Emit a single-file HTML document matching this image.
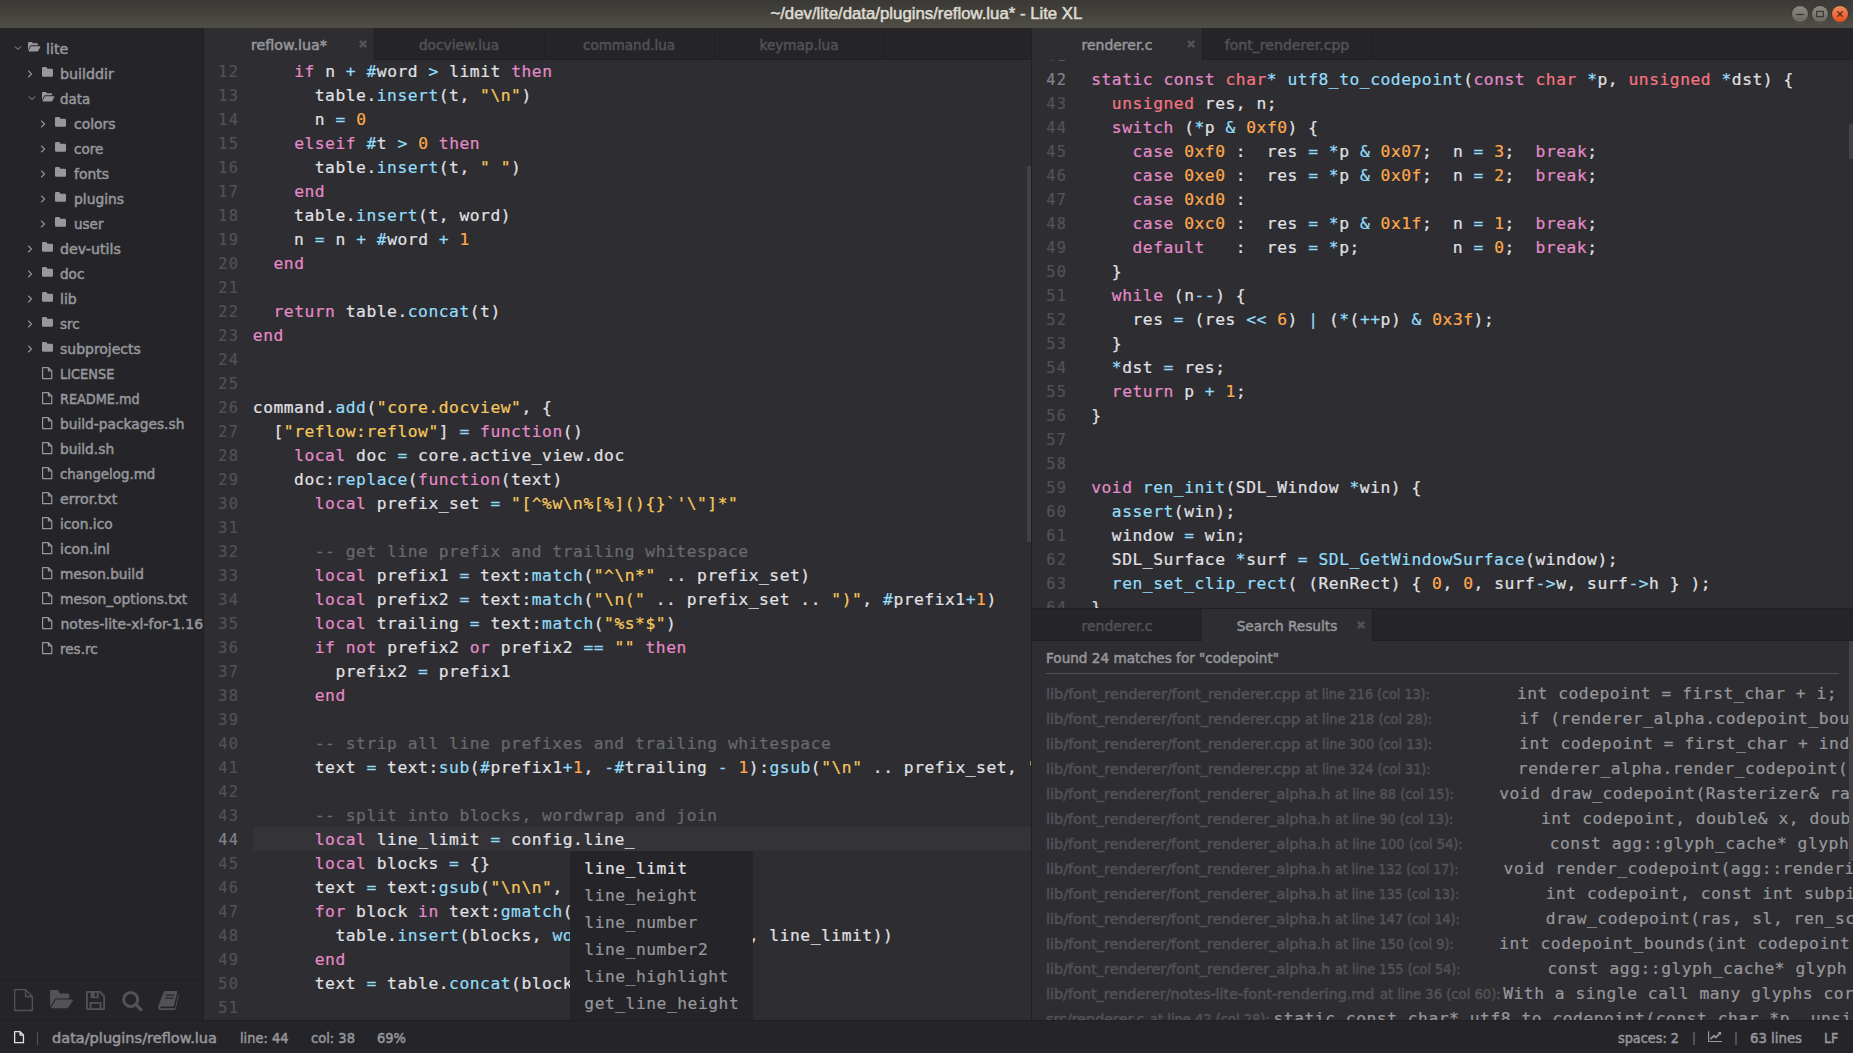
<!DOCTYPE html><html><head><meta charset="utf-8"><title>~/dev/lite/data/plugins/reflow.lua* - Lite XL</title><style>

html,body{margin:0;padding:0;}
body{width:1853px;height:1053px;overflow:hidden;background:#2e2e32;position:relative;font-family:"DejaVu Sans", "Liberation Sans", sans-serif;font-size:14px;color:#97979c;}
div,span,svg{box-sizing:border-box;}
.abs{position:absolute;}
.pane{position:absolute;overflow:hidden;}
.ui{position:absolute;white-space:pre;line-height:24px;height:24px;-webkit-text-stroke:0.5px currentColor;}
.ctr{display:inline-block;white-space:pre;transform:translateX(-50%);}
.ic{position:absolute;display:block;overflow:visible;}
.code{position:absolute;white-space:pre;-webkit-text-stroke:0.2px currentColor;font-family:"DejaVu Sans Mono", "Liberation Mono", monospace;font-size:16.3px;line-height:24px;height:24px;color:#e1e1e6;letter-spacing:0.528px;}
.ln{color:#525259;font-size:15.3px;letter-spacing:1.13px;}
.ln.cur{color:#83838f;}
.cm{color:#676b6f;}.kw{color:#E58AC9;}.k2{color:#F77483;}.nu{color:#FFA94D;}.st{color:#f7c95c;}.op{color:#93DDFA;}.fn{color:#93DDFA;}
.tab{position:absolute;height:32px;}
.tab.act{background:#2e2e32;}
.tabbar{position:absolute;height:32px;background:#252529;border-bottom:1px solid #202024;}
.tsep{position:absolute;width:1px;top:0;height:31px;background:#202024;}
#title{position:absolute;left:0;top:0;width:1853px;height:28px;background:linear-gradient(#3a3935,#403f3a 35%,#504e46);}
#title .t{position:absolute;left:0;width:1853px;top:0;height:28px;line-height:27px;text-align:center;color:#dfdbd2;font-family:"Liberation Sans","DejaVu Sans",sans-serif;font-weight:normal;font-size:16.4px;-webkit-text-stroke:0.55px #dfdbd2;text-shadow:0 -1px 0 rgba(0,0,0,.4);}
.wb{position:absolute;top:6px;width:16px;height:16px;border-radius:50%;box-shadow:0 0 0 1px rgba(40,38,34,.55), 0 1px 0 1px rgba(255,255,255,.08);}

</style></head><body>
<div id="title"><div class="t"><span style="display:inline-block;transform:scaleX(1.0237);">~/dev/lite/data/plugins/reflow.lua* - Lite XL</span></div>
<div class="wb" style="left:1792px;background:linear-gradient(#8c8a80,#6b6962);"></div>
<div class="wb" style="left:1812px;background:linear-gradient(#8c8a80,#6b6962);"></div>
<div class="wb" style="left:1832px;background:linear-gradient(#f58a5f,#e3501d);"></div>
<svg class="ic" style="left:1792.00px;top:6.00px;" width="16.00" height="16.00" viewBox="0 0 16 16" ><path d="M4 8.5 H12" stroke="#3a3934" stroke-width="1.2"/></svg>
<svg class="ic" style="left:1812.00px;top:6.00px;" width="16.00" height="16.00" viewBox="0 0 16 16" ><rect x="4.6" y="5.4" width="6.8" height="5.2" fill="none" stroke="#3a3934" stroke-width="1.2"/></svg>
<svg class="ic" style="left:1832.00px;top:6.00px;" width="16.00" height="16.00" viewBox="0 0 16 16" ><path d="M5.4 5.4 L10.6 10.6 M10.6 5.4 L5.4 10.6" stroke="#3a2016" stroke-width="1.15"/></svg>
</div>
<div class="pane" id="tree" style="left:0;top:28px;width:203px;height:992px;background:#252529;">
<svg class="ic" style="left:12.60px;top:17.20px;color:#97979c;" width="10.00" height="6.00" viewBox="0 0 10 6" ><path d="M1.9 1.4 L5 4.5 L8.1 1.4" fill="none" stroke="currentColor" stroke-width="1.0"/></svg>
<svg class="ic" style="left:28.00px;top:14.20px;color:#97979c;" width="12.54" height="9.41" viewBox="0 0 12.8 9.6" ><path d="M0.9 0 H3.6 Q4.3 0 4.6 0.6 L5 1.4 H9.3 Q10.2 1.4 10.2 2.3 V3.3 H3.4 Q2.5 3.3 2.1 4.1 L0 8.3 V0.9 Q0 0 0.9 0 Z" fill="currentColor"/><path d="M3.5 4.3 H12.1 Q12.9 4.3 12.5 5 L10.6 8.9 Q10.2 9.6 9.4 9.6 H0.9 Q0.3 9.6 0.6 9 L2.5 5 Q2.8 4.3 3.5 4.3 Z" fill="currentColor"/></svg>
<div class="ui " style="top:8.60px;left:46.40px;transform-origin:0 50%;transform:scaleX(1.0141);">lite</div>
<svg class="ic" style="left:26.95px;top:40.50px;color:#97979c;" width="6.00" height="10.00" viewBox="0 0 6 10" ><path d="M1.2 1.75 L4.6 5 L1.2 8.25" fill="none" stroke="currentColor" stroke-width="1.05"/></svg>
<svg class="ic" style="left:41.95px;top:39.40px;color:#97979c;" width="11.00" height="9.80" viewBox="0 0 11 9.8" ><path d="M1.2 0 H3.8 Q4.6 0 4.9 0.7 L5.4 1.8 H9.8 Q11 1.8 11 3 V8.6 Q11 9.8 9.8 9.8 H1.2 Q0 9.8 0 8.6 V1.2 Q0 0 1.2 0 Z" fill="currentColor"/></svg>
<div class="ui " style="top:33.60px;left:60.45px;transform-origin:0 50%;transform:scaleX(1.0157);">builddir</div>
<svg class="ic" style="left:26.65px;top:67.20px;color:#97979c;" width="10.00" height="6.00" viewBox="0 0 10 6" ><path d="M1.9 1.4 L5 4.5 L8.1 1.4" fill="none" stroke="currentColor" stroke-width="1.0"/></svg>
<svg class="ic" style="left:42.05px;top:64.20px;color:#97979c;" width="12.54" height="9.41" viewBox="0 0 12.8 9.6" ><path d="M0.9 0 H3.6 Q4.3 0 4.6 0.6 L5 1.4 H9.3 Q10.2 1.4 10.2 2.3 V3.3 H3.4 Q2.5 3.3 2.1 4.1 L0 8.3 V0.9 Q0 0 0.9 0 Z" fill="currentColor"/><path d="M3.5 4.3 H12.1 Q12.9 4.3 12.5 5 L10.6 8.9 Q10.2 9.6 9.4 9.6 H0.9 Q0.3 9.6 0.6 9 L2.5 5 Q2.8 4.3 3.5 4.3 Z" fill="currentColor"/></svg>
<div class="ui " style="top:58.60px;left:60.45px;transform-origin:0 50%;transform:scaleX(0.9605);">data</div>
<svg class="ic" style="left:40.40px;top:90.50px;color:#97979c;" width="6.00" height="10.00" viewBox="0 0 6 10" ><path d="M1.2 1.75 L4.6 5 L1.2 8.25" fill="none" stroke="currentColor" stroke-width="1.05"/></svg>
<svg class="ic" style="left:55.40px;top:89.40px;color:#97979c;" width="11.00" height="9.80" viewBox="0 0 11 9.8" ><path d="M1.2 0 H3.8 Q4.6 0 4.9 0.7 L5.4 1.8 H9.8 Q11 1.8 11 3 V8.6 Q11 9.8 9.8 9.8 H1.2 Q0 9.8 0 8.6 V1.2 Q0 0 1.2 0 Z" fill="currentColor"/></svg>
<div class="ui " style="top:83.60px;left:73.90px;transform-origin:0 50%;transform:scaleX(0.9957);">colors</div>
<svg class="ic" style="left:40.40px;top:115.50px;color:#97979c;" width="6.00" height="10.00" viewBox="0 0 6 10" ><path d="M1.2 1.75 L4.6 5 L1.2 8.25" fill="none" stroke="currentColor" stroke-width="1.05"/></svg>
<svg class="ic" style="left:55.40px;top:114.40px;color:#97979c;" width="11.00" height="9.80" viewBox="0 0 11 9.8" ><path d="M1.2 0 H3.8 Q4.6 0 4.9 0.7 L5.4 1.8 H9.8 Q11 1.8 11 3 V8.6 Q11 9.8 9.8 9.8 H1.2 Q0 9.8 0 8.6 V1.2 Q0 0 1.2 0 Z" fill="currentColor"/></svg>
<div class="ui " style="top:108.60px;left:73.90px;transform-origin:0 50%;transform:scaleX(0.9694);">core</div>
<svg class="ic" style="left:40.40px;top:140.50px;color:#97979c;" width="6.00" height="10.00" viewBox="0 0 6 10" ><path d="M1.2 1.75 L4.6 5 L1.2 8.25" fill="none" stroke="currentColor" stroke-width="1.05"/></svg>
<svg class="ic" style="left:55.40px;top:139.40px;color:#97979c;" width="11.00" height="9.80" viewBox="0 0 11 9.8" ><path d="M1.2 0 H3.8 Q4.6 0 4.9 0.7 L5.4 1.8 H9.8 Q11 1.8 11 3 V8.6 Q11 9.8 9.8 9.8 H1.2 Q0 9.8 0 8.6 V1.2 Q0 0 1.2 0 Z" fill="currentColor"/></svg>
<div class="ui " style="top:133.60px;left:73.90px;transform-origin:0 50%;transform:scaleX(0.9956);">fonts</div>
<svg class="ic" style="left:40.40px;top:165.50px;color:#97979c;" width="6.00" height="10.00" viewBox="0 0 6 10" ><path d="M1.2 1.75 L4.6 5 L1.2 8.25" fill="none" stroke="currentColor" stroke-width="1.05"/></svg>
<svg class="ic" style="left:55.40px;top:164.40px;color:#97979c;" width="11.00" height="9.80" viewBox="0 0 11 9.8" ><path d="M1.2 0 H3.8 Q4.6 0 4.9 0.7 L5.4 1.8 H9.8 Q11 1.8 11 3 V8.6 Q11 9.8 9.8 9.8 H1.2 Q0 9.8 0 8.6 V1.2 Q0 0 1.2 0 Z" fill="currentColor"/></svg>
<div class="ui " style="top:158.60px;left:73.90px;transform-origin:0 50%;transform:scaleX(0.9883);">plugins</div>
<svg class="ic" style="left:40.40px;top:190.50px;color:#97979c;" width="6.00" height="10.00" viewBox="0 0 6 10" ><path d="M1.2 1.75 L4.6 5 L1.2 8.25" fill="none" stroke="currentColor" stroke-width="1.05"/></svg>
<svg class="ic" style="left:55.40px;top:189.40px;color:#97979c;" width="11.00" height="9.80" viewBox="0 0 11 9.8" ><path d="M1.2 0 H3.8 Q4.6 0 4.9 0.7 L5.4 1.8 H9.8 Q11 1.8 11 3 V8.6 Q11 9.8 9.8 9.8 H1.2 Q0 9.8 0 8.6 V1.2 Q0 0 1.2 0 Z" fill="currentColor"/></svg>
<div class="ui " style="top:183.60px;left:73.90px;transform-origin:0 50%;transform:scaleX(0.9657);">user</div>
<svg class="ic" style="left:26.95px;top:215.50px;color:#97979c;" width="6.00" height="10.00" viewBox="0 0 6 10" ><path d="M1.2 1.75 L4.6 5 L1.2 8.25" fill="none" stroke="currentColor" stroke-width="1.05"/></svg>
<svg class="ic" style="left:41.95px;top:214.40px;color:#97979c;" width="11.00" height="9.80" viewBox="0 0 11 9.8" ><path d="M1.2 0 H3.8 Q4.6 0 4.9 0.7 L5.4 1.8 H9.8 Q11 1.8 11 3 V8.6 Q11 9.8 9.8 9.8 H1.2 Q0 9.8 0 8.6 V1.2 Q0 0 1.2 0 Z" fill="currentColor"/></svg>
<div class="ui " style="top:208.60px;left:60.45px;transform-origin:0 50%;transform:scaleX(1.0149);">dev-utils</div>
<svg class="ic" style="left:26.95px;top:240.50px;color:#97979c;" width="6.00" height="10.00" viewBox="0 0 6 10" ><path d="M1.2 1.75 L4.6 5 L1.2 8.25" fill="none" stroke="currentColor" stroke-width="1.05"/></svg>
<svg class="ic" style="left:41.95px;top:239.40px;color:#97979c;" width="11.00" height="9.80" viewBox="0 0 11 9.8" ><path d="M1.2 0 H3.8 Q4.6 0 4.9 0.7 L5.4 1.8 H9.8 Q11 1.8 11 3 V8.6 Q11 9.8 9.8 9.8 H1.2 Q0 9.8 0 8.6 V1.2 Q0 0 1.2 0 Z" fill="currentColor"/></svg>
<div class="ui " style="top:233.60px;left:60.45px;transform-origin:0 50%;transform:scaleX(0.9699);">doc</div>
<svg class="ic" style="left:26.95px;top:265.50px;color:#97979c;" width="6.00" height="10.00" viewBox="0 0 6 10" ><path d="M1.2 1.75 L4.6 5 L1.2 8.25" fill="none" stroke="currentColor" stroke-width="1.05"/></svg>
<svg class="ic" style="left:41.95px;top:264.40px;color:#97979c;" width="11.00" height="9.80" viewBox="0 0 11 9.8" ><path d="M1.2 0 H3.8 Q4.6 0 4.9 0.7 L5.4 1.8 H9.8 Q11 1.8 11 3 V8.6 Q11 9.8 9.8 9.8 H1.2 Q0 9.8 0 8.6 V1.2 Q0 0 1.2 0 Z" fill="currentColor"/></svg>
<div class="ui " style="top:258.60px;left:60.45px;transform-origin:0 50%;transform:scaleX(1.0017);">lib</div>
<svg class="ic" style="left:26.95px;top:290.50px;color:#97979c;" width="6.00" height="10.00" viewBox="0 0 6 10" ><path d="M1.2 1.75 L4.6 5 L1.2 8.25" fill="none" stroke="currentColor" stroke-width="1.05"/></svg>
<svg class="ic" style="left:41.95px;top:289.40px;color:#97979c;" width="11.00" height="9.80" viewBox="0 0 11 9.8" ><path d="M1.2 0 H3.8 Q4.6 0 4.9 0.7 L5.4 1.8 H9.8 Q11 1.8 11 3 V8.6 Q11 9.8 9.8 9.8 H1.2 Q0 9.8 0 8.6 V1.2 Q0 0 1.2 0 Z" fill="currentColor"/></svg>
<div class="ui " style="top:283.60px;left:60.45px;transform-origin:0 50%;transform:scaleX(0.9632);">src</div>
<svg class="ic" style="left:26.95px;top:315.50px;color:#97979c;" width="6.00" height="10.00" viewBox="0 0 6 10" ><path d="M1.2 1.75 L4.6 5 L1.2 8.25" fill="none" stroke="currentColor" stroke-width="1.05"/></svg>
<svg class="ic" style="left:41.95px;top:314.40px;color:#97979c;" width="11.00" height="9.80" viewBox="0 0 11 9.8" ><path d="M1.2 0 H3.8 Q4.6 0 4.9 0.7 L5.4 1.8 H9.8 Q11 1.8 11 3 V8.6 Q11 9.8 9.8 9.8 H1.2 Q0 9.8 0 8.6 V1.2 Q0 0 1.2 0 Z" fill="currentColor"/></svg>
<div class="ui " style="top:308.60px;left:60.45px;transform-origin:0 50%;transform:scaleX(0.9983);">subprojects</div>
<svg class="ic" style="left:41.75px;top:338.80px;color:#97979c;" width="10.40" height="12.20" viewBox="0 0 10.4 12.2" ><path d="M0.6 0.6 H6.4 L9.8 4.0 V11.6 H0.6 Z M6.4 0.6 V4.0 H9.8" fill="none" stroke="currentColor" stroke-width="1.2" stroke-linejoin="round"/></svg>
<div class="ui " style="top:333.60px;left:60.45px;transform-origin:0 50%;transform:scaleX(0.9257);">LICENSE</div>
<svg class="ic" style="left:41.75px;top:363.80px;color:#97979c;" width="10.40" height="12.20" viewBox="0 0 10.4 12.2" ><path d="M0.6 0.6 H6.4 L9.8 4.0 V11.6 H0.6 Z M6.4 0.6 V4.0 H9.8" fill="none" stroke="currentColor" stroke-width="1.2" stroke-linejoin="round"/></svg>
<div class="ui " style="top:358.60px;left:60.45px;transform-origin:0 50%;transform:scaleX(0.9177);">README.md</div>
<svg class="ic" style="left:41.75px;top:388.80px;color:#97979c;" width="10.40" height="12.20" viewBox="0 0 10.4 12.2" ><path d="M0.6 0.6 H6.4 L9.8 4.0 V11.6 H0.6 Z M6.4 0.6 V4.0 H9.8" fill="none" stroke="currentColor" stroke-width="1.2" stroke-linejoin="round"/></svg>
<div class="ui " style="top:383.60px;left:60.45px;transform-origin:0 50%;transform:scaleX(0.9834);">build-packages.sh</div>
<svg class="ic" style="left:41.75px;top:413.80px;color:#97979c;" width="10.40" height="12.20" viewBox="0 0 10.4 12.2" ><path d="M0.6 0.6 H6.4 L9.8 4.0 V11.6 H0.6 Z M6.4 0.6 V4.0 H9.8" fill="none" stroke="currentColor" stroke-width="1.2" stroke-linejoin="round"/></svg>
<div class="ui " style="top:408.60px;left:60.45px;transform-origin:0 50%;transform:scaleX(0.9828);">build.sh</div>
<svg class="ic" style="left:41.75px;top:438.80px;color:#97979c;" width="10.40" height="12.20" viewBox="0 0 10.4 12.2" ><path d="M0.6 0.6 H6.4 L9.8 4.0 V11.6 H0.6 Z M6.4 0.6 V4.0 H9.8" fill="none" stroke="currentColor" stroke-width="1.2" stroke-linejoin="round"/></svg>
<div class="ui " style="top:433.60px;left:60.45px;transform-origin:0 50%;transform:scaleX(0.9525);">changelog.md</div>
<svg class="ic" style="left:41.75px;top:463.80px;color:#97979c;" width="10.40" height="12.20" viewBox="0 0 10.4 12.2" ><path d="M0.6 0.6 H6.4 L9.8 4.0 V11.6 H0.6 Z M6.4 0.6 V4.0 H9.8" fill="none" stroke="currentColor" stroke-width="1.2" stroke-linejoin="round"/></svg>
<div class="ui " style="top:458.60px;left:60.45px;transform-origin:0 50%;transform:scaleX(1.0190);">error.txt</div>
<svg class="ic" style="left:41.75px;top:488.80px;color:#97979c;" width="10.40" height="12.20" viewBox="0 0 10.4 12.2" ><path d="M0.6 0.6 H6.4 L9.8 4.0 V11.6 H0.6 Z M6.4 0.6 V4.0 H9.8" fill="none" stroke="currentColor" stroke-width="1.2" stroke-linejoin="round"/></svg>
<div class="ui " style="top:483.60px;left:60.45px;transform-origin:0 50%;transform:scaleX(0.9806);">icon.ico</div>
<svg class="ic" style="left:41.75px;top:513.80px;color:#97979c;" width="10.40" height="12.20" viewBox="0 0 10.4 12.2" ><path d="M0.6 0.6 H6.4 L9.8 4.0 V11.6 H0.6 Z M6.4 0.6 V4.0 H9.8" fill="none" stroke="currentColor" stroke-width="1.2" stroke-linejoin="round"/></svg>
<div class="ui " style="top:508.60px;left:60.45px;transform-origin:0 50%;transform:scaleX(0.9972);">icon.inl</div>
<svg class="ic" style="left:41.75px;top:538.80px;color:#97979c;" width="10.40" height="12.20" viewBox="0 0 10.4 12.2" ><path d="M0.6 0.6 H6.4 L9.8 4.0 V11.6 H0.6 Z M6.4 0.6 V4.0 H9.8" fill="none" stroke="currentColor" stroke-width="1.2" stroke-linejoin="round"/></svg>
<div class="ui " style="top:533.60px;left:60.45px;transform-origin:0 50%;transform:scaleX(0.9760);">meson.build</div>
<svg class="ic" style="left:41.75px;top:563.80px;color:#97979c;" width="10.40" height="12.20" viewBox="0 0 10.4 12.2" ><path d="M0.6 0.6 H6.4 L9.8 4.0 V11.6 H0.6 Z M6.4 0.6 V4.0 H9.8" fill="none" stroke="currentColor" stroke-width="1.2" stroke-linejoin="round"/></svg>
<div class="ui " style="top:558.60px;left:60.45px;transform-origin:0 50%;transform:scaleX(0.9840);">meson_options.txt</div>
<svg class="ic" style="left:41.75px;top:588.80px;color:#97979c;" width="10.40" height="12.20" viewBox="0 0 10.4 12.2" ><path d="M0.6 0.6 H6.4 L9.8 4.0 V11.6 H0.6 Z M6.4 0.6 V4.0 H9.8" fill="none" stroke="currentColor" stroke-width="1.2" stroke-linejoin="round"/></svg>
<div class="ui " style="top:583.60px;left:60.45px;transform-origin:0 50%;">notes-lite-xl-for-1.16.md</div>
<svg class="ic" style="left:41.75px;top:613.80px;color:#97979c;" width="10.40" height="12.20" viewBox="0 0 10.4 12.2" ><path d="M0.6 0.6 H6.4 L9.8 4.0 V11.6 H0.6 Z M6.4 0.6 V4.0 H9.8" fill="none" stroke="currentColor" stroke-width="1.2" stroke-linejoin="round"/></svg>
<div class="ui " style="top:608.60px;left:60.45px;transform-origin:0 50%;transform:scaleX(0.9678);">res.rc</div>
<div class="abs" style="left:0;top:951px;width:204px;height:1px;background:#202024"></div>
<svg class="ic" style="left:14.00px;top:961.00px;color:#525257;" width="19.00" height="22.20" viewBox="0 0 19 22.2" ><path d="M0.675 0.675 H11.524999999999999 L18.325 7.475 V21.525 H0.675 Z M11.524999999999999 0.675 V7.475 H18.325" fill="none" stroke="currentColor" stroke-width="1.35" stroke-linejoin="round"/></svg>
<svg class="ic" style="left:49.00px;top:961.00px;color:#525257;" width="26.00" height="21.00" viewBox="0 0 26 21" ><path d="M1.1 2.0 Q1.1 1.1 2.0 1.1 H8.4 Q9.2 1.1 9.6 1.9 L10.8 4.6 H18.9 Q20.2 4.6 20.2 5.9 V9.5 H7.4 Q6.3 9.5 5.7 10.5 L1.1 18.1 Z" fill="currentColor"/><path d="M7.7 10.6 H23.4 Q24.4 10.6 23.9 11.5 L19.4 18.5 Q18.9 19.2 18.0 19.2 H2.6 Q1.6 19.2 2.1 18.3 L6.3 11.4 Q6.8 10.6 7.7 10.6 Z" fill="currentColor"/></svg>
<svg class="ic" style="left:86.00px;top:963.20px;color:#525257;" width="19.00" height="19.00" viewBox="0 0 19 19" ><path fill-rule="evenodd" fill="currentColor" d="M1.2 0 H14.2 L19 4.8 V17.8 Q19 19 17.8 19 H1.2 Q0 19 0 17.8 V1.2 Q0 0 1.2 0 Z M1.8 1.8 V17.2 H3.6 V11 H15.4 V17.2 H17.2 V5.6 L13.4 1.8 H12.6 V7.2 H4.6 V1.8 Z M8.6 1.8 V5.4 H10.8 V1.8 Z M5.4 12.8 V17.2 H13.6 V12.8 Z"/></svg>
<svg class="ic" style="left:122.00px;top:963.00px;color:#525257;" width="21.00" height="20.50" viewBox="0 0 21 20.5" ><circle cx="8.7" cy="8.5" r="7.0" fill="none" stroke="currentColor" stroke-width="3.1"/><path d="M13.6 13.4 L19.0 18.6" stroke="currentColor" stroke-width="3.3" stroke-linecap="round"/></svg>
<svg class="ic" style="left:158.00px;top:963.20px;color:#525257;" width="21.00" height="19.00" viewBox="0 0 21 19" ><path fill="currentColor" fill-rule="evenodd" d="M6 0.6 Q6.3 0 7 0 H18.6 Q19.6 0 19.3 1 L16 14.6 Q15.8 15.4 15 15.4 H3.4 Q2.2 15.4 2.2 16.4 Q2.2 17.3 3.4 17.3 H16 Q16.9 17.3 17.2 16.4 L20.3 3.6 L21 4 L17.8 17.4 Q17.4 19 15.8 19 H3 Q0 19 0.2 16.2 Q0.3 15 0.8 13.6 Z M8 3.4 L7.7 4.8 H16.2 L16.5 3.4 Z M7.3 6.4 L7 7.8 H15.5 L15.8 6.4 Z"/></svg>
</div>
<div class="abs" style="left:203px;top:28px;width:1px;height:992px;background:#202024"></div>
<div class="pane" id="left" style="left:204px;top:28px;width:827px;height:992px;background:#2e2e32;">
<div class="tabbar" style="left:0;top:0;width:827px;"></div>
<div class="tab act" style="left:0px;top:0;width:170px;"></div>
<svg class="ic" style="left:154.60px;top:11.90px;color:#525257;" width="8.20" height="8.20" viewBox="0 0 8.2 8.2" ><path d="M0.95 0.95 L7.25 7.25 M7.25 0.95 L0.95 7.25" stroke="currentColor" stroke-width="2.5" fill="none"/></svg>
<div class="tsep" style="left:170px;"></div>
<div class="ui " style="top:4.60px;left:85.00px;width:0;transform-origin:50% 50%;color:#97979c;"><span class="ctr" style="transform:translateX(-50%) scaleX(1.0214);">reflow.lua*</span></div>
<div class="tsep" style="left:340px;"></div>
<div class="ui " style="top:4.60px;left:255.00px;width:0;transform-origin:50% 50%;color:#525257;"><span class="ctr" style="transform:translateX(-50%) scaleX(0.9792);">docview.lua</span></div>
<div class="tsep" style="left:510px;"></div>
<div class="ui " style="top:4.60px;left:425.00px;width:0;transform-origin:50% 50%;color:#525257;"><span class="ctr" style="transform:translateX(-50%) scaleX(0.9616);">command.lua</span></div>
<div class="tsep" style="left:680px;"></div>
<div class="ui " style="top:4.60px;left:595.00px;width:0;transform-origin:50% 50%;color:#525257;"><span class="ctr" style="transform:translateX(-50%) scaleX(0.9704);">keymap.lua</span></div>
<div class="abs" style="left:48.8px;top:799px;width:800px;height:24px;background:#343438"></div>
<div class="code ln" style="left:14.30px;top:32.00px;">12</div>
<div class="code" style="left:48.80px;top:32.00px;">    <span class="kw">if</span> n <span class="op">+</span> <span class="op">#</span>word <span class="op">&gt;</span> limit <span class="kw">then</span></div>
<div class="code ln" style="left:14.30px;top:56.00px;">13</div>
<div class="code" style="left:48.80px;top:56.00px;">      table.<span class="fn">insert</span>(t, <span class="st">"\n"</span>)</div>
<div class="code ln" style="left:14.30px;top:80.00px;">14</div>
<div class="code" style="left:48.80px;top:80.00px;">      n <span class="op">=</span> <span class="nu">0</span></div>
<div class="code ln" style="left:14.30px;top:104.00px;">15</div>
<div class="code" style="left:48.80px;top:104.00px;">    <span class="kw">elseif</span> <span class="op">#</span>t <span class="op">&gt;</span> <span class="nu">0</span> <span class="kw">then</span></div>
<div class="code ln" style="left:14.30px;top:128.00px;">16</div>
<div class="code" style="left:48.80px;top:128.00px;">      table.<span class="fn">insert</span>(t, <span class="st">" "</span>)</div>
<div class="code ln" style="left:14.30px;top:152.00px;">17</div>
<div class="code" style="left:48.80px;top:152.00px;">    <span class="kw">end</span></div>
<div class="code ln" style="left:14.30px;top:176.00px;">18</div>
<div class="code" style="left:48.80px;top:176.00px;">    table.<span class="fn">insert</span>(t, word)</div>
<div class="code ln" style="left:14.30px;top:200.00px;">19</div>
<div class="code" style="left:48.80px;top:200.00px;">    n <span class="op">=</span> n <span class="op">+</span> <span class="op">#</span>word <span class="op">+</span> <span class="nu">1</span></div>
<div class="code ln" style="left:14.30px;top:224.00px;">20</div>
<div class="code" style="left:48.80px;top:224.00px;">  <span class="kw">end</span></div>
<div class="code ln" style="left:14.30px;top:248.00px;">21</div>
<div class="code ln" style="left:14.30px;top:272.00px;">22</div>
<div class="code" style="left:48.80px;top:272.00px;">  <span class="kw">return</span> table.<span class="fn">concat</span>(t)</div>
<div class="code ln" style="left:14.30px;top:296.00px;">23</div>
<div class="code" style="left:48.80px;top:296.00px;"><span class="kw">end</span></div>
<div class="code ln" style="left:14.30px;top:320.00px;">24</div>
<div class="code ln" style="left:14.30px;top:344.00px;">25</div>
<div class="code ln" style="left:14.30px;top:368.00px;">26</div>
<div class="code" style="left:48.80px;top:368.00px;">command.<span class="fn">add</span>(<span class="st">"core.docview"</span>, {</div>
<div class="code ln" style="left:14.30px;top:392.00px;">27</div>
<div class="code" style="left:48.80px;top:392.00px;">  [<span class="st">"reflow:reflow"</span>] <span class="op">=</span> <span class="kw">function</span>()</div>
<div class="code ln" style="left:14.30px;top:416.00px;">28</div>
<div class="code" style="left:48.80px;top:416.00px;">    <span class="kw">local</span> doc <span class="op">=</span> core.active_view.doc</div>
<div class="code ln" style="left:14.30px;top:440.00px;">29</div>
<div class="code" style="left:48.80px;top:440.00px;">    doc:<span class="fn">replace</span>(<span class="kw">function</span>(text)</div>
<div class="code ln" style="left:14.30px;top:464.00px;">30</div>
<div class="code" style="left:48.80px;top:464.00px;">      <span class="kw">local</span> prefix_set <span class="op">=</span> <span class="st">"[^%w\n%[%](){}`'\"]*"</span></div>
<div class="code ln" style="left:14.30px;top:488.00px;">31</div>
<div class="code ln" style="left:14.30px;top:512.00px;">32</div>
<div class="code" style="left:48.80px;top:512.00px;">      <span class="cm">-- get line prefix and trailing whitespace</span></div>
<div class="code ln" style="left:14.30px;top:536.00px;">33</div>
<div class="code" style="left:48.80px;top:536.00px;">      <span class="kw">local</span> prefix1 <span class="op">=</span> text:<span class="fn">match</span>(<span class="st">"^\n*"</span> .. prefix_set)</div>
<div class="code ln" style="left:14.30px;top:560.00px;">34</div>
<div class="code" style="left:48.80px;top:560.00px;">      <span class="kw">local</span> prefix2 <span class="op">=</span> text:<span class="fn">match</span>(<span class="st">"\n("</span> .. prefix_set .. <span class="st">")"</span>, <span class="op">#</span>prefix1<span class="op">+</span><span class="nu">1</span>)</div>
<div class="code ln" style="left:14.30px;top:584.00px;">35</div>
<div class="code" style="left:48.80px;top:584.00px;">      <span class="kw">local</span> trailing <span class="op">=</span> text:<span class="fn">match</span>(<span class="st">"%s*$"</span>)</div>
<div class="code ln" style="left:14.30px;top:608.00px;">36</div>
<div class="code" style="left:48.80px;top:608.00px;">      <span class="kw">if</span> <span class="kw">not</span> prefix2 <span class="kw">or</span> prefix2 <span class="op">==</span> <span class="st">""</span> <span class="kw">then</span></div>
<div class="code ln" style="left:14.30px;top:632.00px;">37</div>
<div class="code" style="left:48.80px;top:632.00px;">        prefix2 <span class="op">=</span> prefix1</div>
<div class="code ln" style="left:14.30px;top:656.00px;">38</div>
<div class="code" style="left:48.80px;top:656.00px;">      <span class="kw">end</span></div>
<div class="code ln" style="left:14.30px;top:680.00px;">39</div>
<div class="code ln" style="left:14.30px;top:704.00px;">40</div>
<div class="code" style="left:48.80px;top:704.00px;">      <span class="cm">-- strip all line prefixes and trailing whitespace</span></div>
<div class="code ln" style="left:14.30px;top:728.00px;">41</div>
<div class="code" style="left:48.80px;top:728.00px;">      text <span class="op">=</span> text:<span class="fn">sub</span>(<span class="op">#</span>prefix1<span class="op">+</span><span class="nu">1</span>, <span class="op">-#</span>trailing <span class="op">-</span> <span class="nu">1</span>):<span class="fn">gsub</span>(<span class="st">"\n"</span> .. prefix_set, <span class="st">"\n"</span>)</div>
<div class="code ln" style="left:14.30px;top:752.00px;">42</div>
<div class="code ln" style="left:14.30px;top:776.00px;">43</div>
<div class="code" style="left:48.80px;top:776.00px;">      <span class="cm">-- split into blocks, wordwrap and join</span></div>
<div class="code ln cur" style="left:14.30px;top:800.00px;">44</div>
<div class="code" style="left:48.80px;top:800.00px;">      <span class="kw">local</span> line_limit <span class="op">=</span> config.line_</div>
<div class="code ln" style="left:14.30px;top:824.00px;">45</div>
<div class="code" style="left:48.80px;top:824.00px;">      <span class="kw">local</span> blocks <span class="op">=</span> {}</div>
<div class="code ln" style="left:14.30px;top:848.00px;">46</div>
<div class="code" style="left:48.80px;top:848.00px;">      text <span class="op">=</span> text:<span class="fn">gsub</span>(<span class="st">"\n\n"</span>, <span class="st">"\0"</span>)</div>
<div class="code ln" style="left:14.30px;top:872.00px;">47</div>
<div class="code" style="left:48.80px;top:872.00px;">      <span class="kw">for</span> block <span class="kw">in</span> text:<span class="fn">gmatch</span>(<span class="st">"%Z+"</span>) <span class="kw">do</span></div>
<div class="code ln" style="left:14.30px;top:896.00px;">48</div>
<div class="code" style="left:48.80px;top:896.00px;">        table.<span class="fn">insert</span>(blocks, <span class="fn">wordwrap_text</span>(block, line_limit))</div>
<div class="code ln" style="left:14.30px;top:920.00px;">49</div>
<div class="code" style="left:48.80px;top:920.00px;">      <span class="kw">end</span></div>
<div class="code ln" style="left:14.30px;top:944.00px;">50</div>
<div class="code" style="left:48.80px;top:944.00px;">      text <span class="op">=</span> table.<span class="fn">concat</span>(blocks, <span class="st">"\n\n"</span>)</div>
<div class="code ln" style="left:14.30px;top:968.00px;">51</div>
<div class="abs" style="left:823px;top:138px;width:4px;height:376px;background:#414146"></div>
<div class="abs" style="left:366px;top:823px;width:183px;height:175px;background:#252529"></div>
<div class="code" style="left:380.30px;top:829.00px;color:#e1e1e6">line_limit</div>
<div class="code" style="left:380.30px;top:856.00px;color:#97979c">line_height</div>
<div class="code" style="left:380.30px;top:883.00px;color:#97979c">line_number</div>
<div class="code" style="left:380.30px;top:910.00px;color:#97979c">line_number2</div>
<div class="code" style="left:380.30px;top:937.00px;color:#97979c">line_highlight</div>
<div class="code" style="left:380.30px;top:964.00px;color:#97979c">get_line_height</div>
</div>
<div class="abs" style="left:1031px;top:28px;width:1px;height:992px;background:#202024"></div>
<div class="pane" id="rt" style="left:1032px;top:28px;width:821px;height:580px;background:#2e2e32;">
<div class="tabbar" style="left:0;top:0;width:821px;"></div>
<div class="tab act" style="left:0px;top:0;width:170px;"></div>
<svg class="ic" style="left:154.60px;top:11.90px;color:#525257;" width="8.20" height="8.20" viewBox="0 0 8.2 8.2" ><path d="M0.95 0.95 L7.25 7.25 M7.25 0.95 L0.95 7.25" stroke="currentColor" stroke-width="2.5" fill="none"/></svg>
<div class="tsep" style="left:170px;"></div>
<div class="ui " style="top:4.60px;left:85.00px;width:0;transform-origin:50% 50%;color:#97979c;"><span class="ctr" style="transform:translateX(-50%) scaleX(0.9982);">renderer.c</span></div>
<div class="tsep" style="left:340px;"></div>
<div class="ui " style="top:4.60px;left:255.00px;width:0;transform-origin:50% 50%;color:#525257;"><span class="ctr" style="transform:translateX(-50%) scaleX(1.0069);">font_renderer.cpp</span></div>
<div class="pane" style="left:0;top:32px;width:821px;height:548px;">
<div class="code ln" style="left:14.30px;top:-16.00px;">41</div>
<div class="code ln cur" style="left:14.30px;top:8.00px;">42</div>
<div class="code" style="left:59.20px;top:8.00px;"><span class="kw">static</span> <span class="kw">const</span> <span class="k2">char</span><span class="op">*</span> <span class="fn">utf8_to_codepoint</span>(<span class="kw">const</span> <span class="k2">char</span> <span class="op">*</span>p, <span class="k2">unsigned</span> <span class="op">*</span>dst) {</div>
<div class="code ln" style="left:14.30px;top:32.00px;">43</div>
<div class="code" style="left:59.20px;top:32.00px;">  <span class="k2">unsigned</span> res, n;</div>
<div class="code ln" style="left:14.30px;top:56.00px;">44</div>
<div class="code" style="left:59.20px;top:56.00px;">  <span class="kw">switch</span> (<span class="op">*</span>p <span class="op">&amp;</span> <span class="nu">0xf0</span>) {</div>
<div class="code ln" style="left:14.30px;top:80.00px;">45</div>
<div class="code" style="left:59.20px;top:80.00px;">    <span class="kw">case</span> <span class="nu">0xf0</span> :  res <span class="op">=</span> <span class="op">*</span>p <span class="op">&amp;</span> <span class="nu">0x07</span>;  n <span class="op">=</span> <span class="nu">3</span>;  <span class="kw">break</span>;</div>
<div class="code ln" style="left:14.30px;top:104.00px;">46</div>
<div class="code" style="left:59.20px;top:104.00px;">    <span class="kw">case</span> <span class="nu">0xe0</span> :  res <span class="op">=</span> <span class="op">*</span>p <span class="op">&amp;</span> <span class="nu">0x0f</span>;  n <span class="op">=</span> <span class="nu">2</span>;  <span class="kw">break</span>;</div>
<div class="code ln" style="left:14.30px;top:128.00px;">47</div>
<div class="code" style="left:59.20px;top:128.00px;">    <span class="kw">case</span> <span class="nu">0xd0</span> :</div>
<div class="code ln" style="left:14.30px;top:152.00px;">48</div>
<div class="code" style="left:59.20px;top:152.00px;">    <span class="kw">case</span> <span class="nu">0xc0</span> :  res <span class="op">=</span> <span class="op">*</span>p <span class="op">&amp;</span> <span class="nu">0x1f</span>;  n <span class="op">=</span> <span class="nu">1</span>;  <span class="kw">break</span>;</div>
<div class="code ln" style="left:14.30px;top:176.00px;">49</div>
<div class="code" style="left:59.20px;top:176.00px;">    <span class="kw">default</span>   :  res <span class="op">=</span> <span class="op">*</span>p;         n <span class="op">=</span> <span class="nu">0</span>;  <span class="kw">break</span>;</div>
<div class="code ln" style="left:14.30px;top:200.00px;">50</div>
<div class="code" style="left:59.20px;top:200.00px;">  }</div>
<div class="code ln" style="left:14.30px;top:224.00px;">51</div>
<div class="code" style="left:59.20px;top:224.00px;">  <span class="kw">while</span> (n<span class="op">--</span>) {</div>
<div class="code ln" style="left:14.30px;top:248.00px;">52</div>
<div class="code" style="left:59.20px;top:248.00px;">    res <span class="op">=</span> (res <span class="op">&lt;&lt;</span> <span class="nu">6</span>) <span class="op">|</span> (<span class="op">*</span>(<span class="op">++</span>p) <span class="op">&amp;</span> <span class="nu">0x3f</span>);</div>
<div class="code ln" style="left:14.30px;top:272.00px;">53</div>
<div class="code" style="left:59.20px;top:272.00px;">  }</div>
<div class="code ln" style="left:14.30px;top:296.00px;">54</div>
<div class="code" style="left:59.20px;top:296.00px;">  <span class="op">*</span>dst <span class="op">=</span> res;</div>
<div class="code ln" style="left:14.30px;top:320.00px;">55</div>
<div class="code" style="left:59.20px;top:320.00px;">  <span class="kw">return</span> p <span class="op">+</span> <span class="nu">1</span>;</div>
<div class="code ln" style="left:14.30px;top:344.00px;">56</div>
<div class="code" style="left:59.20px;top:344.00px;">}</div>
<div class="code ln" style="left:14.30px;top:368.00px;">57</div>
<div class="code ln" style="left:14.30px;top:392.00px;">58</div>
<div class="code ln" style="left:14.30px;top:416.00px;">59</div>
<div class="code" style="left:59.20px;top:416.00px;"><span class="kw">void</span> <span class="fn">ren_init</span>(SDL_Window <span class="op">*</span>win) {</div>
<div class="code ln" style="left:14.30px;top:440.00px;">60</div>
<div class="code" style="left:59.20px;top:440.00px;">  <span class="fn">assert</span>(win);</div>
<div class="code ln" style="left:14.30px;top:464.00px;">61</div>
<div class="code" style="left:59.20px;top:464.00px;">  window <span class="op">=</span> win;</div>
<div class="code ln" style="left:14.30px;top:488.00px;">62</div>
<div class="code" style="left:59.20px;top:488.00px;">  SDL_Surface <span class="op">*</span>surf <span class="op">=</span> <span class="fn">SDL_GetWindowSurface</span>(window);</div>
<div class="code ln" style="left:14.30px;top:512.00px;">63</div>
<div class="code" style="left:59.20px;top:512.00px;">  <span class="fn">ren_set_clip_rect</span>( (RenRect) { <span class="nu">0</span>, <span class="nu">0</span>, surf<span class="op">-&gt;</span>w, surf<span class="op">-&gt;</span>h } );</div>
<div class="code ln" style="left:14.30px;top:536.00px;">64</div>
<div class="code" style="left:59.20px;top:536.00px;">}</div>
</div>
<div class="abs" style="left:817px;top:96px;width:4px;height:35px;background:#414146"></div>
</div>
<div class="abs" style="left:1032px;top:608px;width:821px;height:1px;background:#202024"></div>
<div class="pane" id="rb" style="left:1032px;top:609px;width:821px;height:411px;background:#2e2e32;">
<div class="tabbar" style="left:0;top:0;width:821px;"></div>
<div class="tsep" style="left:170px;"></div>
<div class="ui " style="top:4.90px;left:85.00px;width:0;transform-origin:50% 50%;color:#525257;"><span class="ctr" style="transform:translateX(-50%) scaleX(0.9982);">renderer.c</span></div>
<div class="tab act" style="left:170px;top:0;width:170px;"></div>
<svg class="ic" style="left:324.60px;top:12.20px;color:#525257;" width="8.20" height="8.20" viewBox="0 0 8.2 8.2" ><path d="M0.95 0.95 L7.25 7.25 M7.25 0.95 L0.95 7.25" stroke="currentColor" stroke-width="2.5" fill="none"/></svg>
<div class="tsep" style="left:340px;"></div>
<div class="ui " style="top:4.90px;left:255.00px;width:0;transform-origin:50% 50%;color:#97979c;"><span class="ctr" style="transform:translateX(-50%) scaleX(0.9757);">Search Results</span></div>
<div class="ui " style="top:36.60px;left:14.00px;transform-origin:0 50%;color:#97979c;transform:scaleX(0.9702);">Found 24 matches for "codepoint"</div>
<div class="abs" style="left:14px;top:64px;width:793px;height:1px;background:#525257"></div>
<div class="ui " style="top:72.60px;left:14.00px;transform-origin:0 50%;color:#525257;transform:scaleX(1.0377);">lib/font_renderer/font_renderer.cpp</div>
<div class="ui " style="top:72.60px;left:273.40px;transform-origin:0 50%;color:#525257;transform:scaleX(0.9078);">at line 216 (col 13):</div>
<div class="code" style="left:484.90px;top:73.00px;color:#97979c">int codepoint = first_char + i;</div>
<div class="ui " style="top:97.60px;left:14.00px;transform-origin:0 50%;color:#525257;transform:scaleX(1.0377);">lib/font_renderer/font_renderer.cpp</div>
<div class="ui " style="top:97.60px;left:273.40px;transform-origin:0 50%;color:#525257;transform:scaleX(0.9246);">at line 218 (col 28):</div>
<div class="code" style="left:487.20px;top:98.00px;color:#97979c">if (renderer_alpha.codepoint_bounds(codepoint, subpixel_scale, gxmin, gxmax, gymin, gymax)) {</div>
<div class="ui " style="top:122.60px;left:14.00px;transform-origin:0 50%;color:#525257;transform:scaleX(1.0377);">lib/font_renderer/font_renderer.cpp</div>
<div class="ui " style="top:122.60px;left:273.40px;transform-origin:0 50%;color:#525257;transform:scaleX(0.9246);">at line 300 (col 13):</div>
<div class="code" style="left:487.20px;top:123.00px;color:#97979c">int codepoint = first_char + index;</div>
<div class="ui " style="top:147.60px;left:14.00px;transform-origin:0 50%;color:#525257;transform:scaleX(1.0377);">lib/font_renderer/font_renderer.cpp</div>
<div class="ui " style="top:147.60px;left:273.40px;transform-origin:0 50%;color:#525257;transform:scaleX(0.9137);">at line 324 (col 31):</div>
<div class="code" style="left:485.80px;top:148.00px;color:#97979c">renderer_alpha.render_codepoint(ren_buf, text_color, x_next, y, codepoint, subpixel_scale);</div>
<div class="ui " style="top:172.60px;left:14.00px;transform-origin:0 50%;color:#525257;transform:scaleX(1.0321);">lib/font_renderer/font_renderer_alpha.h</div>
<div class="ui " style="top:172.60px;left:303.20px;transform-origin:0 50%;color:#525257;transform:scaleX(0.9248);">at line 88 (col 15):</div>
<div class="code" style="left:467.20px;top:173.00px;color:#97979c">void draw_codepoint(Rasterizer&amp; ras, Scanline&amp; sl,</div>
<div class="ui " style="top:197.60px;left:14.00px;transform-origin:0 50%;color:#525257;transform:scaleX(1.0321);">lib/font_renderer/font_renderer_alpha.h</div>
<div class="ui " style="top:197.60px;left:303.20px;transform-origin:0 50%;color:#525257;transform:scaleX(0.9202);">at line 90 (col 13):</div>
<div class="code" style="left:508.90px;top:198.00px;color:#97979c">int codepoint, double&amp; x, double&amp; y,</div>
<div class="ui " style="top:222.60px;left:14.00px;transform-origin:0 50%;color:#525257;transform:scaleX(1.0321);">lib/font_renderer/font_renderer_alpha.h</div>
<div class="ui " style="top:222.60px;left:303.20px;transform-origin:0 50%;color:#525257;transform:scaleX(0.9289);">at line 100 (col 54):</div>
<div class="code" style="left:517.70px;top:223.00px;color:#97979c">const agg::glyph_cache* glyph = m_fman.glyph(codepoint);</div>
<div class="ui " style="top:247.60px;left:14.00px;transform-origin:0 50%;color:#525257;transform:scaleX(1.0321);">lib/font_renderer/font_renderer_alpha.h</div>
<div class="ui " style="top:247.60px;left:303.20px;transform-origin:0 50%;color:#525257;transform:scaleX(0.8977);">at line 132 (col 17):</div>
<div class="code" style="left:471.60px;top:248.00px;color:#97979c">void render_codepoint(agg::rendering_buffer&amp; ren_buf,</div>
<div class="ui " style="top:272.60px;left:14.00px;transform-origin:0 50%;color:#525257;transform:scaleX(1.0321);">lib/font_renderer/font_renderer_alpha.h</div>
<div class="ui " style="top:272.60px;left:303.20px;transform-origin:0 50%;color:#525257;transform:scaleX(0.9042);">at line 135 (col 13):</div>
<div class="code" style="left:513.70px;top:273.00px;color:#97979c">int codepoint, const int subpixel_scale)</div>
<div class="ui " style="top:297.60px;left:14.00px;transform-origin:0 50%;color:#525257;transform:scaleX(1.0321);">lib/font_renderer/font_renderer_alpha.h</div>
<div class="ui " style="top:297.60px;left:303.20px;transform-origin:0 50%;color:#525257;transform:scaleX(0.9078);">at line 147 (col 14):</div>
<div class="code" style="left:513.70px;top:298.00px;color:#97979c">draw_codepoint(ras, sl, ren_sc, color, x, y, codepoint, subpixel_scale);</div>
<div class="ui " style="top:322.60px;left:14.00px;transform-origin:0 50%;color:#525257;transform:scaleX(1.0321);">lib/font_renderer/font_renderer_alpha.h</div>
<div class="ui " style="top:322.60px;left:303.20px;transform-origin:0 50%;color:#525257;transform:scaleX(0.9241);">at line 150 (col 9):</div>
<div class="code" style="left:467.20px;top:323.00px;color:#97979c">int codepoint_bounds(int codepoint, int subpixel_scale,</div>
<div class="ui " style="top:347.60px;left:14.00px;transform-origin:0 50%;color:#525257;transform:scaleX(1.0321);">lib/font_renderer/font_renderer_alpha.h</div>
<div class="ui " style="top:347.60px;left:303.20px;transform-origin:0 50%;color:#525257;transform:scaleX(0.9137);">at line 155 (col 54):</div>
<div class="code" style="left:515.50px;top:348.00px;color:#97979c">const agg::glyph_cache* glyph = m_fman.glyph(codepoint);</div>
<div class="ui " style="top:372.60px;left:14.00px;transform-origin:0 50%;color:#525257;transform:scaleX(1.0273);">lib/font_renderer/notes-lite-font-rendering.md</div>
<div class="ui " style="top:372.60px;left:347.80px;transform-origin:0 50%;color:#525257;transform:scaleX(0.9396);">at line 36 (col 60):</div>
<div class="code" style="left:471.20px;top:373.00px;color:#97979c">With a single call many glyphs corresponding to a range of codepoints</div>
<div class="ui " style="top:397.60px;left:14.00px;transform-origin:0 50%;color:#525257;transform:scaleX(1.0230);">src/renderer.c</div>
<div class="ui " style="top:397.60px;left:117.70px;transform-origin:0 50%;color:#525257;transform:scaleX(0.9318);">at line 42 (col 28):</div>
<div class="code" style="left:241.50px;top:398.00px;color:#97979c">static const char* utf8_to_codepoint(const char *p, unsigned *dst) {</div>
<div class="abs" style="left:817px;top:32px;width:4px;height:220px;background:#414146"></div>
</div>
<div class="pane" id="status" style="left:0;top:1020px;width:1853px;height:33px;background:#252529;">
<div class="abs" style="left:0;top:0;width:1853px;height:1px;background:#202024"></div>
<svg class="ic" style="left:13.80px;top:10.90px;color:#e1e1e6;" width="10.10" height="12.30" viewBox="0 0 10.1 12.3" ><path d="M0.65 0.65 H6.049999999999999 L9.45 4.05 V11.65 H0.65 Z M6.049999999999999 0.65 V4.05 H9.45" fill="none" stroke="currentColor" stroke-width="1.3" stroke-linejoin="round"/></svg>
<div class="abs" style="left:37.20px;top:12px;width:1.3px;height:13px;background:#525257"></div>
<div class="ui " style="top:5.60px;left:52.30px;transform-origin:0 50%;color:#97979c;transform:scaleX(1.0379);">data/plugins/reflow.lua</div>
<div class="ui " style="top:5.60px;left:239.60px;transform-origin:0 50%;color:#97979c;transform:scaleX(0.9263);">line: 44</div>
<div class="ui " style="top:5.60px;left:311.00px;transform-origin:0 50%;color:#97979c;transform:scaleX(0.9334);">col: 38</div>
<div class="ui " style="top:5.60px;left:377.00px;transform-origin:0 50%;color:#97979c;transform:scaleX(0.9317);">69%</div>
<div class="ui " style="top:5.60px;left:1618.00px;transform-origin:0 50%;color:#97979c;transform:scaleX(0.9179);">spaces: 2</div>
<div class="abs" style="left:1693.40px;top:12px;width:1.3px;height:13px;background:#525257"></div>
<svg class="ic" style="left:1708.00px;top:11.00px;color:#97979c;" width="14.50" height="11.50" viewBox="0 0 14.5 11.5" ><path d="M0.6 0.2 V10.5 H14.1" fill="none" stroke="currentColor" stroke-width="1.2"/><path d="M2.4 8.2 L6.0 4.6 L7.8 6.5 L11.6 2.6" fill="none" stroke="currentColor" stroke-width="1.7"/><path d="M9.6 1.1 H13.1 V4.6 Z" fill="currentColor"/></svg>
<div class="abs" style="left:1735.40px;top:12px;width:1.3px;height:13px;background:#525257"></div>
<div class="ui " style="top:5.60px;left:1750.00px;transform-origin:0 50%;color:#97979c;transform:scaleX(0.9484);">63 lines</div>
<div class="ui " style="top:5.60px;left:1824.40px;transform-origin:0 50%;color:#97979c;transform:scaleX(0.9017);">LF</div>
</div>
</body></html>
